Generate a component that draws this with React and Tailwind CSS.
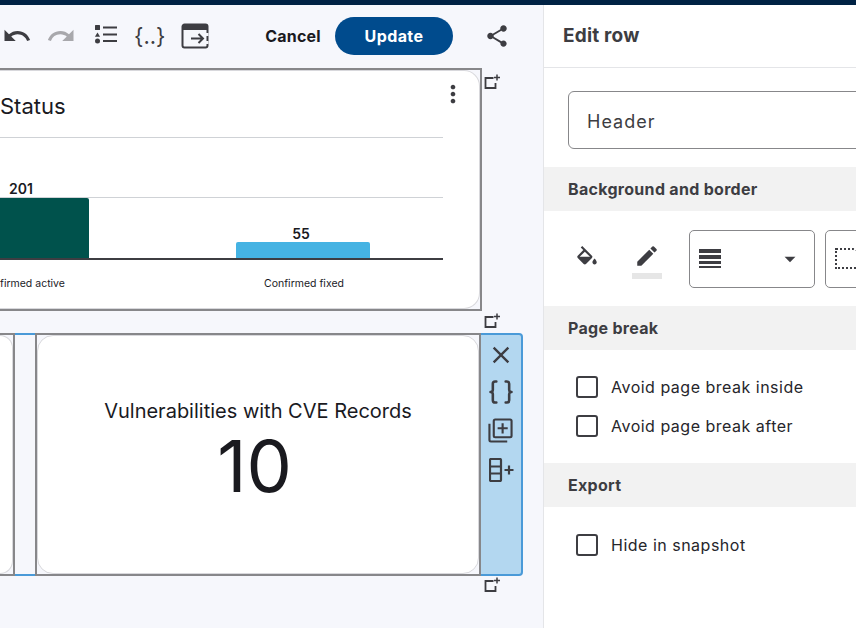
import React from 'react';
import { Braces } from 'lucide-react';
import { MdUndo, MdRedo, MdShare, MdClose, MdEdit, MdArrowDropDown, MdMoreVert } from 'react-icons/md';

function AddRowIcon({ className }) {
  return (
    <svg viewBox="0 0 16 16" className={className} fill="none" stroke="#3d3d42" strokeWidth="1.8">
      <path d="M9.5 4H1.5v10h10V9" />
      <path d="M13 0.5v6M10 3.5h6" strokeWidth="1.5" />
    </svg>
  );
}

function ListIcon() {
  return (
    <svg viewBox="0 0 24 24" className="w-[24px] h-[24px]" fill="#3d3d42">
      <rect x="1" y="1" width="5" height="5" rx="0.5" />
      <path d="M3.5 8.5l2.6 4.2H.9z" />
      <circle cx="3.5" cy="17" r="2.5" />
      <rect x="9" y="2.5" width="14" height="2" />
      <rect x="9" y="9.5" width="14" height="2" />
      <rect x="9" y="16" width="14" height="2" />
    </svg>
  );
}

function ExportIcon() {
  return (
    <svg viewBox="0 0 28 26" className="w-[28px] h-[26px]" fill="none" stroke="#3d3d42">
      <path d="M1.5 3.5a2 2 0 012-2h21a2 2 0 012 2v19a2 2 0 01-2 2h-21a2 2 0 01-2-2z" strokeWidth="2" />
      <path d="M1.5 2.5h25v4h-25z" fill="#3d3d42" strokeWidth="1" />
      <path d="M10 15.5h12M17.5 11l4.5 4.5-4.5 4.5" strokeWidth="2" />
      <path d="M26 10v3M26 18v3" stroke="#f6f7fc" strokeWidth="3" />
    </svg>
  );
}

function ColumnsAddIcon() {
  return (
    <svg viewBox="0 0 26 24" className="w-[26px] h-[24px]" fill="none" stroke="#3d3d42" strokeWidth="2.2">
      <rect x="1" y="1" width="11" height="22" rx="1" />
      <path d="M1 8.5h11M1 15.5h11" />
      <path d="M20 7.5v9M15.5 12h9" />
    </svg>
  );
}

function LibraryAddIcon() {
  return (
    <svg viewBox="0 0 26 26" className="w-[25px] h-[25px]" fill="none" stroke="#3d3d42" strokeWidth="2.2">
      <path d="M1.5 6v17a1.5 1.5 0 001.5 1.5h17" />
      <rect x="6" y="1.5" width="18.5" height="18.5" rx="1.5" />
      <path d="M15.2 5.5v10.5M10 10.7h10.5" />
    </svg>
  );
}

function PaintIcon() {
  return (
    <svg viewBox="0 0 24 24" className="w-[26px] h-[26px]" fill="#3d3d42">
      <path d="M16.56 8.94L7.62 0 6.21 1.41l2.38 2.38-5.15 5.15c-.59.59-.59 1.54 0 2.12l5.5 5.5c.29.29.68.44 1.06.44s.77-.15 1.06-.44l5.5-5.5c.59-.58.59-1.53 0-2.12zM5.21 10L10 5.21 14.79 10H5.21zM19 11.5s-2 2.17-2 3.5c0 1.1.9 2 2 2s2-.9 2-2c0-1.33-2-3.5-2-3.5z" />
    </svg>
  );
}

function LinesIcon() {
  return (
    <div className="flex flex-col gap-[2px] w-[22px]">
      <div className="h-[4px] bg-[#3d3d42]" />
      <div className="h-[4px] bg-[#3d3d42]" />
      <div className="h-[3px] bg-[#3d3d42]" />
      <div className="h-[2px] bg-[#3d3d42]" />
    </div>
  );
}

function Checkbox({ label }) {
  return (
    <label className="flex items-center gap-[13px]">
      <span className="w-[22px] h-[22px] rounded-[3px] border-2 border-[#3d3d42] bg-white shrink-0" />
      <span className="text-[16px] tracking-[0.5px] text-[#26262b]">{label}</span>
    </label>
  );
}

function SectionHeading({ children }) {
  return (
    <div className="h-[44px] bg-[#f2f2f2] flex items-center pl-[24px] text-[16px] font-bold tracking-[0.3px] text-[#3d3d42]">
      {children}
    </div>
  );
}

export default function App() {
  return (
    <div className="w-[856px] h-[628px] overflow-hidden flex flex-col bg-white font-['Inter',sans-serif]">
      <div className="h-[5px] bg-[#002244] shrink-0" />
      <div className="flex flex-1 min-h-0">
        {/* canvas */}
        <div className="w-[544px] shrink-0 bg-[#f6f7fc] border-r border-[#e4e5e8] overflow-hidden">
          <div className="h-[63px] flex items-center pl-[2px] pb-[2px]">
            <MdUndo className="w-[30px] h-[30px] text-[#3d3d42]" />
            <MdRedo className="w-[30px] h-[30px] text-[#a8a8ac] ml-[14px]" />
            <div className="ml-[18px]"><ListIcon /></div>
            <span className="ml-[16px] w-[32px] text-[22px] leading-none text-[#3d3d42] whitespace-nowrap">{'{..}'}</span>
            <div className="ml-[15px]"><ExportIcon /></div>
            <button className="ml-[56px] w-[56px] text-[16px] font-bold tracking-[0.2px] text-[#1a1a1f] whitespace-nowrap">Cancel</button>
            <button className="ml-[14px] w-[118px] h-[38px] rounded-full bg-[#004b8d] text-white text-[16px] font-bold tracking-[0.4px]">Update</button>
            <MdShare className="ml-[31px] w-[26px] h-[26px] text-[#3d3d42]" />
          </div>

          {/* row 1 */}
          <div className="flex items-start">
            <div className="w-[482px] h-[243px] shrink-0 border-y-2 border-r-2 border-[#87878a]">
              <div className="h-full bg-white border-y border-r border-[#d8d8dc] rounded-r-[16px] flex flex-col">
                <div className="h-[66px] flex items-start justify-between pr-[12px]">
                  <span className="mt-[21px] text-[22px] leading-[28px] text-[#1a1a1f]">Status</span>
                  <MdMoreVert className="mt-[9px] w-[28px] h-[28px] text-[#3d3d42]" />
                </div>
                <div className="mr-[36px] flex flex-col border-t border-[#cfd2d6]">
                  <div className="h-[60px] border-b border-[#cfd2d6] flex items-end">
                    <span className="ml-[9px] text-[14px] leading-[16px] font-semibold text-[#1a1a1f]">201</span>
                  </div>
                  <div className="h-[62px] border-b-2 border-[#3d3d42] flex items-end">
                    <div className="w-[89px] h-[60px] bg-[#00524c] rounded-tr-[2px]" />
                    <div className="ml-[147px] w-[134px] flex flex-col items-center">
                      <span className="pr-[4px] text-[14px] leading-[16px] font-semibold text-[#1a1a1f]">55</span>
                      <div className="w-full h-[16px] bg-[#45b3e3] rounded-t-[2px]" />
                    </div>
                  </div>
                </div>
                <div className="flex mt-[16px] text-[10.5px] leading-[16px] text-[#1a1a1f]">
                  <span className="w-[236px]">firmed active</span>
                  <span className="w-[134px] text-center pl-[2px]">Confirmed fixed</span>
                </div>
              </div>
            </div>
            <AddRowIcon className="w-[16px] h-[16px] ml-[2px] mt-[6px]" />
          </div>

          {/* row 2 */}
          <div className="h-[22px] pl-[484px] pt-[2px]"><AddRowIcon className="w-[16px] h-[16px]" /></div>
          <div className="flex items-stretch h-[243px]">
            <div className="w-[15px] shrink-0 border-y-2 border-r-2 border-[#87878a]">
              <div className="h-full bg-white border-y border-r border-[#d8d8dc] rounded-r-[14px]" />
            </div>
            <div className="w-[20px] shrink-0 border-y-2 border-[#4a9ad8]" />
            <div className="w-[446px] shrink-0 border-2 border-[#87878a]">
              <div className="h-full bg-white border border-[#d8d8dc] rounded-[16px] flex flex-col items-center pt-[60px]">
                <span className="text-[20px] text-[#1a1a1f]">Vulnerabilities with CVE Records</span>
                <span className="mr-[7px] text-[72px] leading-[80px] text-[#1a1a1f]">10</span>
              </div>
            </div>
            <div className="w-[42px] shrink-0 bg-[#b3d7f0] border-y-2 border-r-2 border-[#4a9ad8] rounded-r-[4px] flex flex-col items-center pt-[2px]">
              <div className="h-[35px] flex items-center"><MdClose className="w-[28px] h-[28px] text-[#3d3d42]" /></div>
              <div className="h-[39px] flex items-center"><Braces className="w-[28px] h-[28px] text-[#3d3d42]" strokeWidth={2.2} /></div>
              <div className="h-[39px] flex items-center -ml-[2px]"><LibraryAddIcon /></div>
              <div className="h-[39px] flex items-center ml-[1px]"><ColumnsAddIcon /></div>
            </div>
          </div>
          <AddRowIcon className="w-[16px] h-[16px] ml-[484px] mt-[1px]" />
        </div>

        {/* side panel */}
        <div className="flex-1 min-w-0 overflow-hidden bg-white">
          <div className="h-[63px] border-b border-[#e4e5e8] flex items-center pl-[19px] text-[19px] font-bold tracking-[0.2px] text-[#3d3d42]">
            Edit row
          </div>
          <div className="px-[24px] pt-[23px] pb-[18px] w-[400px]">
            <div className="h-[58px] rounded-[6px] border border-[#87878a] flex items-center pl-[18px] pt-[2px] text-[18px] tracking-[1px] text-[#3d3d42]">
              Header
            </div>
          </div>
          <SectionHeading>Background and border</SectionHeading>
          <div className="h-[95px] flex items-center pl-[30px] w-[400px]">
            <PaintIcon />
            <div className="ml-[32px] flex flex-col items-center pt-[4px]">
              <MdEdit className="w-[26px] h-[26px] text-[#3d3d42]" />
              <div className="w-[30px] h-[6px] bg-[#e6e6e6] mt-[4px]" />
            </div>
            <div className="ml-[27px] w-[126px] h-[58px] rounded-[5px] border border-[#87878a] flex items-center justify-between pl-[9px] pr-[13px]">
              <LinesIcon />
              <MdArrowDropDown className="w-[26px] h-[26px] text-[#3d3d42] -mr-[2px]" />
            </div>
            <div className="ml-[10px] w-[100px] h-[58px] rounded-[5px] border border-[#87878a] flex items-center pl-[9px]">
              <div className="w-[24px] h-[21px] border-2 border-dotted border-[#3d3d42] rounded-tr-[6px]" />
            </div>
          </div>
          <SectionHeading>Page break</SectionHeading>
          <div className="flex flex-col gap-[15px] pl-[32px] pt-[25px] h-[113px]">
            <Checkbox label="Avoid page break inside" />
            <Checkbox label="Avoid page break after" />
          </div>
          <SectionHeading>Export</SectionHeading>
          <div className="pl-[32px] pt-[26px]">
            <Checkbox label="Hide in snapshot" />
          </div>
        </div>
      </div>
    </div>
  );
}
